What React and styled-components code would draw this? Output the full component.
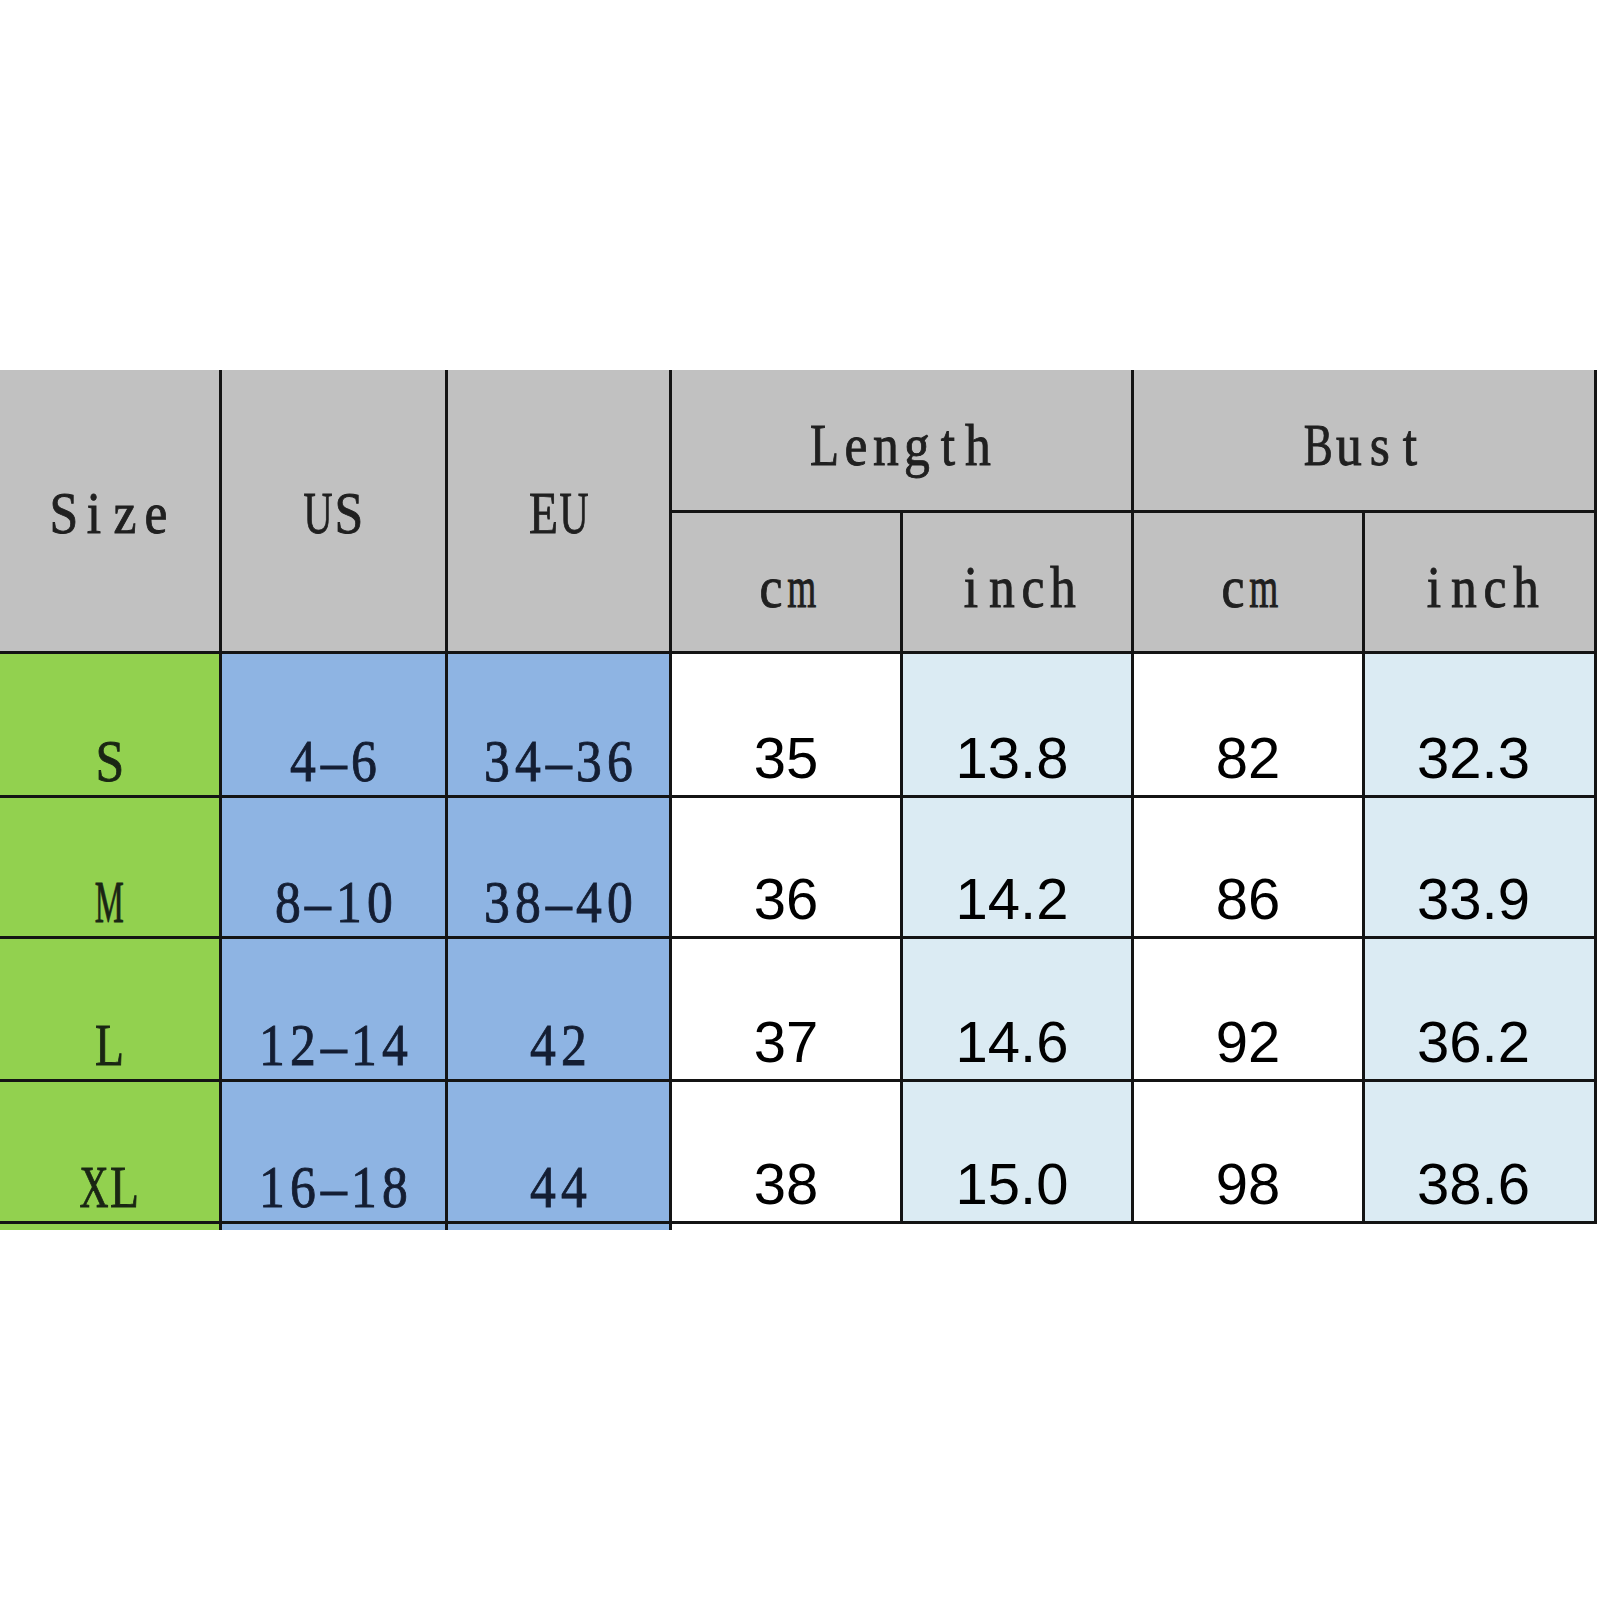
import React from "react";
import styled, { createGlobalStyle } from "styled-components";

const Global = createGlobalStyle`
  html, body { margin: 0; padding: 0; background: #ffffff; }
  body { width: 1600px; height: 1600px; overflow: hidden; }
`;

const Page = styled.div`
  width: 1600px;
  height: 1600px;
  background: #ffffff;
  padding-top: 370px;
  box-sizing: border-box;
`;

const Table = styled.div`
  display: grid;
  width: 1597px;
  grid-template-columns: 222px 226px 224px 231px 231px 231px 232px;
  grid-template-rows: 143px 141px 144px 141px 143px 142px 6px;
`;

const LINE = "#141414";

const Cell = styled.div`
  box-sizing: border-box;
  display: flex;
  justify-content: center;
  align-items: ${(p) => (p.$bottom ? "flex-end" : "center")};
  padding-bottom: ${(p) => p.$pb || 0}px;
  padding-top: ${(p) => p.$pt || 0}px;
  padding-right: ${(p) => p.$pr || 0}px;
  background: ${(p) => p.$bg};
  border-right: ${(p) => (p.$noRight ? "none" : `3px solid ${LINE}`)};
  border-bottom: ${(p) => (p.$noBottom ? "none" : `3px solid ${LINE}`)};
  grid-column: ${(p) => p.$col || "auto"};
  grid-row: ${(p) => p.$row || "auto"};
`;

const FONT_PX = 60;
const PITCH = 30.7;

const Word = styled.span`
  display: inline-flex;
  font-family: "Liberation Serif", "DejaVu Serif", serif;
  font-size: ${FONT_PX}px;
  line-height: 1;
  color: ${(p) => p.$color || "#202020"};
  white-space: nowrap;
`;

const Glyph = styled.span`
  display: inline-flex;
  justify-content: center;
  width: ${(p) => (PITCH / p.$sx).toFixed(2)}px;
  margin: 0 ${(p) => ((PITCH - PITCH / p.$sx) / 2).toFixed(2)}px;
  transform: scaleX(${(p) => p.$sx});
  -webkit-text-stroke: 0.9px currentColor;
`;

// advance widths of Liberation Serif (per 1000 em)
const WIDTHS = {
  S: 556, U: 722, E: 611, L: 611, B: 667, M: 889, X: 722,
  i: 278, z: 444, e: 444, n: 500, g: 500, t: 278, h: 500,
  u: 500, s: 389, c: 444, m: 778,
};

const fitScale = (ch) => {
  const w = ((WIDTHS[ch] || 500) / 1000) * FONT_PX;
  return Math.min(0.86, 29 / w);
};

const MonoText = ({ children, color }) => (
  <Word $color={color}>
    {String(children)
      .split("")
      .map((ch, i) => (
        <Glyph key={i} $sx={fitScale(ch)}>
          {ch === "-" ? "\u2013" : ch}
        </Glyph>
      ))}
  </Word>
);

const NumText = styled.span`
  font-family: "Liberation Sans", Arial, sans-serif;
  font-size: 58px;
  line-height: 1;
  color: #000000;
  white-space: nowrap;
`;

const GRAY = "#c1c1c1";
const GREEN = "#92d14f";
const BLUE = "#8eb4e3";
const PALE = "#dbebf3";
const WHITE = "#ffffff";

const rows = [
  ["S", "4-6", "34-36", "35", "13.8", "82", "32.3"],
  ["M", "8-10", "38-40", "36", "14.2", "86", "33.9"],
  ["L", "12-14", "42", "37", "14.6", "92", "36.2"],
  ["XL", "16-18", "44", "38", "15.0", "98", "38.6"],
];

export default function App() {
  return (
    <Page>
      <Global />
      <Table>
        <Cell $bg={GRAY} $row="1 / span 2" $col="1" $pt={5}>
          <MonoText>Size</MonoText>
        </Cell>
        <Cell $bg={GRAY} $row="1 / span 2" $col="2" $pt={5}>
          <MonoText>US</MonoText>
        </Cell>
        <Cell $bg={GRAY} $row="1 / span 2" $col="3" $pt={5}>
          <MonoText>EU</MonoText>
        </Cell>
        <Cell $bg={GRAY} $row="1" $col="4 / span 2" $pt={10}>
          <MonoText>Length</MonoText>
        </Cell>
        <Cell $bg={GRAY} $row="1" $col="6 / span 2" $pt={10}>
          <MonoText>Bust</MonoText>
        </Cell>
        <Cell $bg={GRAY} $row="2" $col="4" $pt={10}>
          <MonoText>cm</MonoText>
        </Cell>
        <Cell $bg={GRAY} $row="2" $col="5" $pt={10}>
          <MonoText>inch</MonoText>
        </Cell>
        <Cell $bg={GRAY} $row="2" $col="6" $pt={10}>
          <MonoText>cm</MonoText>
        </Cell>
        <Cell $bg={GRAY} $row="2" $col="7" $pt={10}>
          <MonoText>inch</MonoText>
        </Cell>
        {rows.map((r) => (
          <React.Fragment key={r[0]}>
            <Cell $bg={GREEN} $bottom $pb={4}>
              <MonoText color="#1a2614">{r[0]}</MonoText>
            </Cell>
            <Cell $bg={BLUE} $bottom $pb={4}>
              <MonoText color="#141e33">{r[1]}</MonoText>
            </Cell>
            <Cell $bg={BLUE} $bottom $pb={4}>
              <MonoText color="#141e33">{r[2]}</MonoText>
            </Cell>
            <Cell $bg={WHITE} $bottom $pb={8}>
              <NumText>{r[3]}</NumText>
            </Cell>
            <Cell $bg={PALE} $bottom $pb={8} $pr={10}>
              <NumText>{r[4]}</NumText>
            </Cell>
            <Cell $bg={WHITE} $bottom $pb={8}>
              <NumText>{r[5]}</NumText>
            </Cell>
            <Cell $bg={PALE} $bottom $pb={8} $pr={12}>
              <NumText>{r[6]}</NumText>
            </Cell>
          </React.Fragment>
        ))}
        <Cell $bg={GREEN} $noBottom />
        <Cell $bg={BLUE} $noBottom />
        <Cell $bg={BLUE} $noBottom />
        <Cell $bg={WHITE} $noBottom $noRight $col="4 / span 4" />
      </Table>
    </Page>
  );
}
